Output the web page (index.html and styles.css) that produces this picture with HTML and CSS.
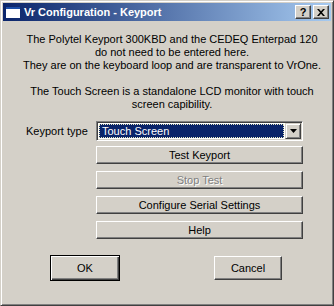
FILE: index.html
```html
<!DOCTYPE html>
<html>
<head>
<meta charset="utf-8">
<link rel="stylesheet" href="styles.css">
</head>
<body>
<div class="window">
  <div class="titlebar">
    <svg class="app-icon" width="16" height="16" viewBox="0 0 16 16">
      <rect x="1" y="3" width="14" height="11" fill="#ffffff"/>
      <rect x="1" y="3" width="14" height="2" fill="#1c4ea8"/>
    </svg>
    <span class="title">Vr Configuration - Keyport</span>
    <div class="caption-buttons">
      <div class="cap-btn"><span class="help-glyph">?</span></div>
      <div class="cap-btn">
        <svg width="8" height="7" viewBox="0 0 8 7">
          <path d="M0 0h2l2 2.2L6 0h2L5 3.5 8 7H6L4 4.8 2 7H0l3-3.5z" fill="#000"/>
        </svg>
      </div>
    </div>
  </div>
  <div class="client">
    <p class="message">The Polytel Keyport 300KBD and the CEDEQ Enterpad 120<br>do not need to be entered here.<br>They are on the keyboard loop and are transparent to VrOne.<br><br>The Touch Screen is a standalone LCD monitor with touch<br>screen capibility.</p>
    <div class="type-row">
      <span class="label">Keyport type</span>
      <div class="combo">
        <div class="combo-field"><span>Touch Screen</span></div>
        <div class="combo-btn">
          <svg width="7" height="4" viewBox="0 0 7 4"><path d="M0 0h7L3.5 4z" fill="#000"/></svg>
        </div>
      </div>
    </div>
    <div class="actions">
      <div class="btn wide">Test Keyport</div>
      <div class="btn wide disabled">Stop Test</div>
      <div class="btn wide">Configure Serial Settings</div>
      <div class="btn wide">Help</div>
    </div>
    <div class="footer">
      <div class="btn default">OK</div>
      <div class="btn cancel">Cancel</div>
    </div>
  </div>
</div>
</body>
</html>
```

FILE: styles.css
```css
html, body {
  margin: 0;
  padding: 0;
  background: #d4d0c8;
}

body {
  font-family: "Liberation Sans", Arial, sans-serif;
  font-size: 11px;
  color: #000;
}

.window {
  width: 334px;
  height: 306px;
  box-sizing: border-box;
  background: #d4d0c8;
  border: 1px solid;
  border-color: #d4d0c8 #404040 #404040 #d4d0c8;
  box-shadow: inset 1px 1px #ffffff, inset -1px -1px #808080;
  padding: 2px;
  display: flex;
  flex-direction: column;
}

.titlebar {
  height: 18px;
  display: flex;
  align-items: center;
  background: linear-gradient(to right, #0a246a, #a6caf0);
  color: #fff;
}

.app-icon {
  margin-left: 2px;
  flex: none;
}

.title {
  margin-left: 3px;
  font-weight: bold;
  font-size: 11px;
  white-space: nowrap;
}

.caption-buttons {
  margin-left: auto;
  margin-right: 2px;
  display: flex;
  gap: 2px;
}

.cap-btn {
  width: 16px;
  height: 14px;
  box-sizing: border-box;
  background: #d4d0c8;
  border: 1px solid;
  border-color: #ffffff #404040 #404040 #ffffff;
  box-shadow: inset -1px -1px #808080;
  display: flex;
  align-items: center;
  justify-content: center;
  color: #000;
}

.help-glyph {
  font-weight: bold;
  font-size: 11px;
  line-height: 11px;
  margin-top: 1px;
}

.client {
  display: flex;
  flex-direction: column;
}

.message {
  margin: 12px 0 0 0;
  padding: 0 4px 0 14px;
  text-align: center;
  line-height: 13px;
  white-space: nowrap;
}

.type-row {
  margin-top: 10px;
  display: flex;
  align-items: center;
  height: 20px;
}

.label {
  width: 70px;
  padding-left: 23px;
}

.combo {
  width: 207px;
  height: 20px;
  box-sizing: border-box;
  background: #fff;
  border: 1px solid;
  border-color: #808080 #ffffff #ffffff #808080;
  box-shadow: inset 1px 1px #404040, inset -1px -1px #d4d0c8;
  padding: 2px 1px 1px 2px;
  display: flex;
}

.combo-field {
  flex: 1;
  height: 14px;
  box-sizing: border-box;
  margin-right: 1px;
  background: #0a246a;
  border: 1px dotted #e8e8c0;
  color: #fff;
  line-height: 12px;
  padding-left: 2px;
}

.combo-btn {
  width: 16px;
  height: 16px;
  margin-top: -1px;
  box-sizing: border-box;
  background: #d4d0c8;
  border: 1px solid;
  border-color: #d4d0c8 #404040 #404040 #d4d0c8;
  box-shadow: inset 1px 1px #ffffff, inset -1px -1px #808080;
  display: flex;
  align-items: center;
  justify-content: center;
}

.actions {
  margin-top: 5px;
  margin-left: 93px;
  display: flex;
  flex-direction: column;
  gap: 7px;
}

.btn {
  box-sizing: border-box;
  background: #d4d0c8;
  border: 1px solid;
  border-color: #ffffff #404040 #404040 #ffffff;
  box-shadow: inset -1px -1px #808080;
  display: flex;
  align-items: center;
  justify-content: center;
  white-space: nowrap;
}

.wide {
  width: 207px;
  height: 18px;
}

.disabled {
  color: #808080;
  text-shadow: 1px 1px #ffffff;
}

.footer {
  margin-top: 16px;
  padding-left: 47px;
  display: flex;
  align-items: center;
}

.default {
  width: 70px;
  height: 26px;
  border-color: #000;
  box-shadow: inset 1px 1px #ffffff, inset -1px -1px #404040, inset -2px -2px #808080;
}

.cancel {
  width: 68px;
  height: 24px;
  margin-left: 94px;
}
```
